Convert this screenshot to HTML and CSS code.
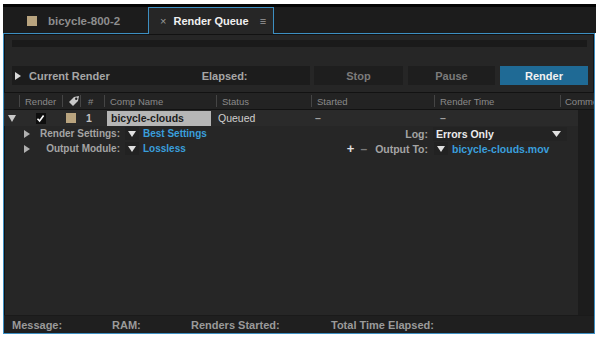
FILE: index.html
```html
<!doctype html>
<html lang="en">
  <head>
    <meta charset="UTF-8" />
    <title>Render Queue</title>
    <link rel="stylesheet" href="styles.css">
  </head>
  <body>
    <div class="app">
      <div class="tabbar">
        <div class="tab">
          <span class="swatch"></span>
          <span class="tab-name">bicycle-800-2</span>
        </div>
        <div class="tab active">
          <span class="tab-close">×</span>
          <span class="tab-title">Render Queue</span>
          <span class="tab-menu">≡</span>
        </div>
      </div>

      <div class="panel">
        <div class="progress"></div>

        <div class="controls">
          <div class="current">
            <svg class="tri" width="6" height="8" viewBox="0 0 6 8"><polygon points="0,0 6,4 0,8" fill="#d8d8d8" /></svg>
            <span class="current-label">Current Render</span>
            <span class="elapsed">Elapsed:</span>
          </div>
          <button class="btn btn-stop">Stop</button>
          <button class="btn btn-pause">Pause</button>
          <button class="btn btn-render">Render</button>
        </div>

        <div class="table">
          <div class="cols head">
            <div class="cell"></div>
            <div class="cell">Render</div>
            <div class="cell">
              <svg width="12" height="12" viewBox="0 0 12 12">
                <path d="M1 7 L6 2 L11 1 L10 6 L5 11 Z" fill="#c8c8c8" />
                <circle cx="8.2" cy="3.8" r="1.2" fill="#232323" />
              </svg>
            </div>
            <div class="cell hash">#</div>
            <div class="cell">Comp Name</div>
            <div class="cell">Status</div>
            <div class="cell">Started</div>
            <div class="cell">Render Time</div>
            <div class="cell last">Comme</div>
          </div>

          <div class="table-body">
            <div class="rows">
              <div class="cols item">
                <div class="cell twist">
                  <svg width="8" height="7" viewBox="0 0 8 7"><polygon points="0,0 8,0 4,7" fill="#c8c8c8" /></svg>
                </div>
                <div class="cell center">
                  <span class="check">
                    <svg width="9" height="9" viewBox="0 0 9 9"><path d="M1.5 4.8 L3.6 7 L7.6 1.5" stroke="#fff" stroke-width="1.6" fill="none" /></svg>
                  </span>
                </div>
                <div class="cell center"><span class="swatch"></span></div>
                <div class="cell num">1</div>
                <div class="cell"><span class="comp-field">bicycle-clouds</span></div>
                <div class="cell status">Queued</div>
                <div class="cell dash">–</div>
                <div class="cell dash dash-time">–</div>
                <div class="cell"></div>
              </div>

              <div class="sub">
                <div class="sub-label">
                  <svg class="tri" width="6" height="8" viewBox="0 0 6 8"><polygon points="0,0 6,4 0,8" fill="#b0b0b0" /></svg>
                  <span>Render Settings:</span>
                </div>
                <div class="sub-value">
                  <span class="drop"><svg width="8" height="6" viewBox="0 0 8 6"><polygon points="0,0 8,0 4,6" fill="#e0e0e0" /></svg></span>
                  <span class="link">Best Settings</span>
                </div>
                <div class="sub-mid">
                  <span class="mid-label">Log:</span>
                </div>
                <div class="log-select">
                  <span>Errors Only</span>
                  <svg width="9" height="6" viewBox="0 0 9 6"><polygon points="0,0 9,0 4.5,6" fill="#e0e0e0" /></svg>
                </div>
              </div>

              <div class="sub">
                <div class="sub-label">
                  <svg class="tri" width="6" height="8" viewBox="0 0 6 8"><polygon points="0,0 6,4 0,8" fill="#b0b0b0" /></svg>
                  <span>Output Module:</span>
                </div>
                <div class="sub-value">
                  <span class="drop"><svg width="8" height="6" viewBox="0 0 8 6"><polygon points="0,0 8,0 4,6" fill="#e0e0e0" /></svg></span>
                  <span class="link">Lossless</span>
                </div>
                <div class="sub-mid">
                  <span class="plus">+</span>
                  <span class="minus">–</span>
                  <span class="mid-label">Output To:</span>
                </div>
                <div class="sub-value out">
                  <span class="drop"><svg width="8" height="6" viewBox="0 0 8 6"><polygon points="0,0 8,0 4,6" fill="#e0e0e0" /></svg></span>
                  <span class="link">bicycle-clouds.mov</span>
                </div>
              </div>
            </div>
            <div class="scroll"></div>
          </div>
        </div>

        <div class="statusbar">
          <span class="st-msg">Message:</span>
          <span class="st-ram">RAM:</span>
          <span class="st-started">Renders Started:</span>
          <span>Total Time Elapsed:</span>
        </div>
      </div>
    </div>
  </body>
</html>
```

FILE: styles.css
```css
html,
body {
  margin: 0;
  background: #fff;
  font-family: 'Liberation Sans', Arial, sans-serif;
}
.app {
  margin: 4px 0 0 3px;
  width: 593px;
}
.tabbar {
  height: 26px;
  border-top: 3px solid #050505;
  background: #1c1c1c;
  display: flex;
  align-items: flex-end;
}
.tab {
  width: 145px;
  height: 25px;
  display: flex;
  align-items: center;
  box-sizing: border-box;
  padding-left: 24px;
  color: #8e8e8e;
  font-size: 11.5px;
  font-weight: bold;
}
.tab .swatch {
  margin-right: 11px;
}
.swatch {
  display: inline-block;
  width: 10px;
  height: 10px;
  background: #b9a47f;
}
.tab.active {
  position: relative;
  z-index: 1;
  width: 126px;
  height: 27px;
  margin-bottom: -1px;
  padding-left: 11px;
  background: #262626;
  border: 1px solid #3d8fc2;
  border-bottom: none;
  color: #f0f0f0;
  font-size: 11px;
}
.tab-close {
  color: #9a9a9a;
  font-weight: normal;
  font-size: 11px;
  margin-right: 7px;
}
.tab-menu {
  color: #9a9a9a;
  font-weight: normal;
  margin-left: 11px;
}
.panel {
  width: 592px;
  height: 301px;
  box-sizing: border-box;
  border: 1px solid #3d8fc2;
  box-shadow: inset 0 0 0 1px #121212;
  background: #262626;
  display: flex;
  flex-direction: column;
}
.progress {
  height: 7px;
  margin: 6px 7px 0 8px;
  background: #1a1a1a;
}
.controls {
  display: flex;
  height: 19px;
  margin: 19px 6px 0 8px;
}
.current {
  width: 298px;
  display: flex;
  align-items: center;
  background: #1c1c1c;
  color: #a6a6a6;
  font-size: 11px;
  font-weight: bold;
}
.current .tri {
  margin: 0 8px 0 3px;
}
.elapsed {
  margin-left: 92px;
}
.btn {
  border: none;
  padding: 0;
  height: 19px;
  font-family: inherit;
  font-size: 11px;
  font-weight: bold;
  background: #1e1e1e;
  color: #7b7b7b;
}
.btn-stop {
  width: 89px;
  margin-left: 4px;
}
.btn-pause {
  width: 87px;
  margin-left: 5px;
}
.btn-render {
  width: 88px;
  margin-left: 5px;
  background: #1f6a95;
  color: #f2f2f2;
}
.table {
  flex: 1;
  display: flex;
  flex-direction: column;
  margin-top: 7px;
}
.cols {
  display: grid;
  grid-template-columns: 15px 43px 18px 24px 112px 95px 123px 126px 1fr;
}
.head {
  height: 16px;
  border-top: 1px solid #121212;
  border-bottom: 1px solid #121212;
  background: #232323;
  color: #8a8a8a;
  font-size: 9.5px;
  white-space: nowrap;
}
.head .cell {
  display: flex;
  align-items: center;
  padding-left: 5px;
  border-left: 1px solid #454545;
  margin: 2px 0;
  height: 12px;
}
.head .cell:first-child {
  border-left: none;
}
.head .hash {
  padding-left: 7px;
}
.head .last {
  padding-left: 4px;
  overflow: hidden;
}
.table-body {
  flex: 1;
  display: flex;
}
.rows {
  width: 574px;
}
.scroll {
  flex: 1;
  background: #1c1c1c;
}
.item {
  height: 16px;
  background: #2a2a2a;
  color: #d8d8d8;
  font-size: 10.5px;
  font-weight: bold;
}
.item .cell {
  display: flex;
  align-items: center;
}
.item .twist {
  padding-left: 4px;
}
.center {
  justify-content: center;
}
.check {
  width: 10px;
  height: 11px;
  background: #0e0e0e;
  display: flex;
  align-items: center;
  justify-content: center;
}
.num {
  padding-left: 6px;
  color: #c4c4c4;
}
.comp-field {
  margin-left: 3px;
  width: 104px;
  height: 15px;
  box-sizing: border-box;
  padding-left: 4px;
  line-height: 15px;
  background: #b6b6b6;
  color: #1b1b1b;
}
.status {
  padding-left: 2px;
  color: #cfcfcf;
  font-weight: normal;
}
.dash {
  padding-left: 4px;
  color: #a0a0a0;
}
.dash-time {
  padding-left: 6px;
}
.sub {
  height: 15px;
  display: grid;
  grid-template-columns: 116px 212px 96px 1fr;
  align-items: center;
  font-size: 10px;
  font-weight: bold;
  color: #a4a4a4;
  white-space: nowrap;
}
.sub-label {
  display: flex;
  align-items: center;
  justify-content: space-between;
  padding-left: 20px;
}
.sub-value {
  display: flex;
  align-items: center;
  padding-left: 5px;
}
.drop {
  display: flex;
  align-items: center;
  justify-content: center;
  width: 14px;
  height: 13px;
  margin-right: 4px;
  background: #222;
}
.link {
  color: #3a9fdc;
}
.sub-mid {
  display: flex;
  align-items: center;
  justify-content: flex-end;
}
.mid-label {
  font-size: 10.5px;
}
.plus {
  color: #e0e0e0;
  font-size: 13px;
  margin-right: 6px;
}
.minus {
  color: #7a7a7a;
  font-size: 12px;
  margin-right: 8px;
}
.log-select {
  display: flex;
  align-items: center;
  justify-content: space-between;
  margin-left: 5px;
  width: 134px;
  height: 14px;
  box-sizing: border-box;
  padding: 0 6px 0 3px;
  background: #232323;
  color: #ececec;
  font-size: 10.5px;
}
.out {
  padding-left: 6px;
  font-size: 10.5px;
}
.statusbar {
  height: 17px;
  display: flex;
  align-items: center;
  padding-left: 8px;
  background: #1f1f1f;
  border-top: 1px solid #1a1a1a;
  color: #9a9a9a;
  font-size: 11px;
  font-weight: bold;
}
.st-msg {
  width: 100px;
}
.st-ram {
  width: 79px;
}
.st-started {
  width: 140px;
}
```
